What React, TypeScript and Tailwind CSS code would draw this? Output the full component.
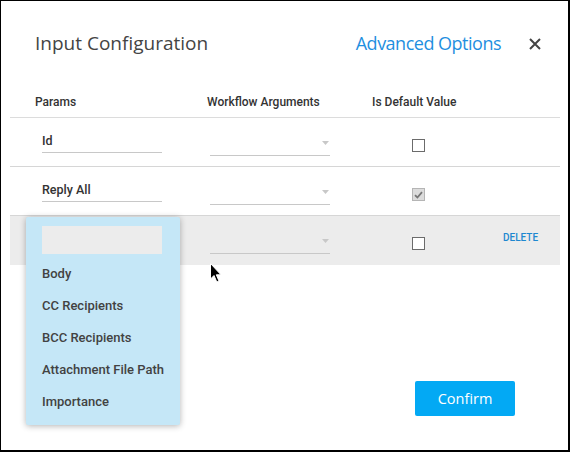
import React from "react";

const rows = [
  { label: "Id", checked: false, active: false },
  { label: "Reply All", checked: true, active: false },
  { label: "", checked: false, active: true },
];

const items = ["Body", "CC Recipients", "BCC Recipients", "Attachment File Path", "Importance"];

function Checkbox({ checked }: { checked: boolean }) {
  if (checked) {
    return (
      <div className="mt-[21px] ml-[82px] flex h-[13px] w-[13px] items-center justify-center border border-[#b5b5b5] bg-[#dcdcdc]">
        <svg width="9" height="8" viewBox="0 0 9 8">
          <path d="M1 4.2 L3.4 6.5 L8 1.2" fill="none" stroke="#777" strokeWidth="1.8" />
        </svg>
      </div>
    );
  }
  return <div className="mt-[21px] ml-[82px] h-[13px] w-[13px] border border-[#6b6b6b] bg-white" />;
}

export default function App() {
  return (
    <div
      className="relative h-[452px] w-[570px] overflow-hidden border-t border-l border-r-2 border-b-2 border-black bg-white"
      style={{ fontFamily: "Roboto, 'Liberation Sans', sans-serif" }}
    >
      {/* Header */}
      <div className="flex h-[85px] items-center pl-[34px] pr-[27px]">
        <div className="text-[19px] text-[#444]" style={{ fontFamily: "'Open Sans', 'Noto Sans', sans-serif" }}>
          Input Configuration
        </div>
        <div
          className="ml-auto text-[18px] tracking-[-0.5px] text-[#1f8fe0]"
          style={{ fontFamily: "'Open Sans', 'Noto Sans', sans-serif" }}
        >
          Advanced Options
        </div>
        <svg className="ml-[28px]" width="12" height="12" viewBox="0 0 12 12">
          <path d="M1 1 L11 11 M11 1 L1 11" stroke="#444" strokeWidth="2" />
        </svg>
      </div>

      {/* Table */}
      <div className="ml-[9px] w-[550px]">
        <div className="flex h-[32px] items-center border-b border-[#dcdcdc] pl-[25px] text-[12px] font-medium text-[#333]">
          <div className="w-[172px]">Params</div>
          <div className="w-[165px]">Workflow Arguments</div>
          <div>Is Default Value</div>
        </div>
        {rows.map((r, i) => (
          <div
            key={i}
            className={
              "flex h-[49px] items-start pl-[32px] " +
              (r.active ? "bg-[#ececec]" : "border-b border-[#d6d6d6]")
            }
          >
            <div className="mt-[12px] flex h-[23px] w-[120px] items-center border-b border-[#c8c8c8] text-[12.5px] font-medium text-[#333]">
              {r.label}
            </div>
            <div className="relative ml-[48px] mt-[14px] h-[24px] w-[120px] border-b border-[#c8c8c8]">
              <svg className="absolute right-[1px] top-[9px]" width="7" height="4" viewBox="0 0 7 4">
                <path d="M0 0 L7 0 L3.5 4 Z" fill="#c8c8c8" />
              </svg>
            </div>
            <Checkbox checked={r.checked} />
            {r.active && (
              <div className="ml-[78px] mt-[17px] text-[10px] font-medium leading-[10px] text-[#1e88d0]">DELETE</div>
            )}
          </div>
        ))}
      </div>

      {/* Footer */}
      <div className="mt-[116px] flex justify-end pr-[53px]">
        <button
          className="flex h-[35px] w-[100px] items-center justify-center rounded-[2px] bg-[#03a9f4] text-[14.5px] text-white"
          style={{ fontFamily: "'Open Sans', 'Noto Sans', sans-serif" }}
        >
          Confirm
        </button>
      </div>

      {/* Dropdown menu */}
      <div className="absolute left-[25px] top-[216px] h-[208px] w-[154px] rounded-[2px] bg-[#c5e7f7] pl-[16px] pt-[9px] shadow-[0_1px_6px_rgba(0,0,0,0.3)]">
        <div className="h-[28px] w-[120px] bg-[#ececec]" />
        <div className="mt-[4px]">
          {items.map((it) => (
            <div key={it} className="flex h-[32px] items-center text-[13px] font-medium text-[#424242]">
              {it}
            </div>
          ))}
        </div>
      </div>

      {/* Cursor */}
      <svg className="absolute left-[209px] top-[262px]" width="13" height="21" viewBox="0 0 13 21">
        <path d="M0.5 0.5 L0.5 16 L4 12.5 L6.8 19 L9 18 L6.3 11.8 L11 11.8 Z" fill="#000" stroke="#fff" strokeWidth="1" />
      </svg>
    </div>
  );
}
